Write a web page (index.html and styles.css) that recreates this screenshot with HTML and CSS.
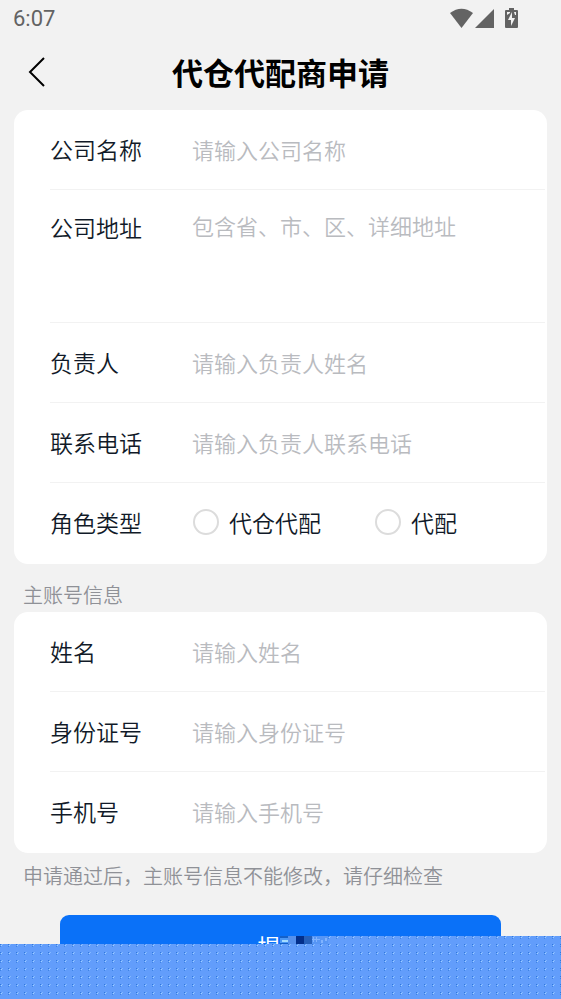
FILE: index.html
```html
<!DOCTYPE html>
<html lang="zh-CN">
<head>
<meta charset="utf-8">
<meta name="viewport" content="width=device-width, initial-scale=1">
<title>代仓代配商申请</title>
<link rel="stylesheet" href="styles.css">
</head>
<body>
<div class="status">
  <span>6:07</span>
  <svg class="status-icons" width="72" height="22" viewBox="0 0 72 22" aria-hidden="true">
    <path d="M0 5Q11.500-3.500 23 5L11.500 20Z"/>
    <path d="M25 20L44 1V20Z"/>
    <path d="M59 0h5v2h3q1 0 1 1v16q0 1-1 1H56q-1 0-1-1V3q0-1 1-1h3Z"/>
    <path class="bolt" d="M62 4L58 12h3v6l4-8h-3ZM57 4h3v1l-3 2ZM64 4h2v3h-1Z"/>
  </svg>
</div>
<header class="nav">
  <button class="back" type="button" aria-label="返回">
    <svg width="18" height="30" viewBox="0 0 18 30"><path d="M16 1L2 15L16 29"/></svg>
  </button>
  <h1>代仓代配商申请</h1>
</header>
<form class="form">
  <section class="card">
    <div class="row"><label for="company">公司名称</label><input id="company" type="text" placeholder="请输入公司名称"></div>
    <div class="row row-tall"><label for="address">公司地址</label><textarea id="address" placeholder="包含省、市、区、详细地址"></textarea></div>
    <div class="row"><label for="leader">负责人</label><input id="leader" type="text" placeholder="请输入负责人姓名"></div>
    <div class="row"><label for="tel">联系电话</label><input id="tel" type="tel" placeholder="请输入负责人联系电话"></div>
    <div class="row" role="radiogroup" aria-labelledby="role-label">
      <span class="caption" id="role-label">角色类型</span>
      <div class="options">
        <label class="option"><input type="radio" name="role">代仓代配</label>
        <label class="option"><input type="radio" name="role">代配</label>
      </div>
    </div>
  </section>
  <h2 class="note note-title">主账号信息</h2>
  <section class="card">
    <div class="row"><label for="name">姓名</label><input id="name" type="text" placeholder="请输入姓名"></div>
    <div class="row"><label for="idno">身份证号</label><input id="idno" type="text" placeholder="请输入身份证号"></div>
    <div class="row"><label for="mobile">手机号</label><input id="mobile" type="tel" placeholder="请输入手机号"></div>
  </section>
  <p class="note">申请通过后，主账号信息不能修改，请仔细检查</p>
  <button class="submit" type="submit">提交</button>
</form>
<div class="veil" aria-hidden="true">
  <div class="veil-step">
    <svg width="48" height="8" viewBox="0 0 48 8">
      <path fill="#1560c8" d="M0 0h8v8H0z"/><path fill="#4a97f5" d="M0 2h8v5H0z"/><path fill="#a5dcff" d="M2 4h6v2H2z"/>
      <path fill="#5590ec" d="M8 0h8v8H8z"/><path fill="#032f8b" d="M16 0h8v8h-8z"/>
      <path fill="#2560bb" d="M24 0h8v8h-8z"/><path fill="#5796f5" d="M32 0h16v8H32z"/>
      <path fill="#80b3ff" d="M33 1h1v5h-1zM36 1h1v5h-1zM32 3h8v1h-8zM41 4h2v3h-2zM45 2h2v3h-2z"/>
    </svg>
  </div>
</div>
</body>
</html>
```
FILE: styles.css
```css
* { box-sizing: border-box; }

body {
  margin: 0;
  min-height: 100vh;
  background: #f2f2f2;
  color: #111a28;
  font-family: "Noto Sans CJK SC", sans-serif;
  font-size: 23px;
  font-weight: 350;
}

.status {
  display: flex;
  justify-content: space-between;
  align-items: center;
  height: 38px;
  padding: 0 39px 0 13px;
  color: #636363;
  font: 400 22px/38px Roboto, sans-serif;
}
.status-icons { fill: #636363; }
.status-icons .bolt { fill: #f2f2f2; }

.nav {
  display: grid;
  grid-template-columns: 48px 1fr 48px;
  align-items: center;
  height: 72px;
  padding: 0 14px 4px;
}
.nav h1 {
  margin: 0;
  color: #000;
  font-size: 31px;
  line-height: 40px;
  font-weight: 700;
  text-align: center;
}
.back {
  display: flex;
  padding: 0 0 0 14px;
  border: 0;
  background: none;
}
.back svg { fill: none; stroke: #000; stroke-width: 2; }

.form { padding: 0 14px; }

.card {
  padding: 0 2px 1px 36px;
  border-radius: 14px;
  background: #fff;
}
.row {
  display: flex;
  align-items: center;
  height: 80px;
  padding-bottom: 2px;
  border-bottom: 1px solid #f2f2f2;
}
.row:last-child { border-bottom: 0; }
.row-tall { align-items: flex-start; height: 133px; padding-top: 19px; }
.row > label, .caption {
  flex: 0 0 142px;
  line-height: 36px;
}
.row > input, textarea {
  flex: 1;
  min-width: 0;
  padding: 0;
  border: 0;
  outline: 0;
  background: none;
  color: inherit;
  font: 350 22px/32px "Noto Sans CJK SC", sans-serif;
}
textarea { height: 96px; resize: none; }
::placeholder { color: #b9bbbf; opacity: 1; }

.options { display: flex; gap: 54px; padding-left: 1px; }
.option { display: flex; align-items: center; gap: 10px; }
.option input {
  appearance: none;
  width: 26px;
  height: 26px;
  margin: 0;
  border: 2px solid #dcdcdc;
  border-radius: 50%;
}

.note {
  margin: 0;
  padding: 0 9px;
  color: #8f9197;
  font-size: 20px;
  line-height: 46px;
  font-weight: 350;
}
.note-title { padding-top: 14px; line-height: 34px; }

.submit {
  display: block;
  width: calc(100% - 92px);
  height: 60px;
  margin: 16px auto 0;
  border: 0;
  border-radius: 9px;
  background: #0a71f8;
  color: #fff;
  font: 400 23px/60px "Noto Sans CJK SC", sans-serif;
}

.veil, .veil-step {
  background-color: #629dfb;
  background-image:
    conic-gradient(from 270deg at 1px 1px, #3279dc 90deg, transparent 0),
    conic-gradient(from 270deg at 1px 1px, #a0cfff 90deg, transparent 0),
    conic-gradient(from 270deg at 1px 1px, #82b8ff 90deg, transparent 0),
    conic-gradient(from 270deg at 1px 1px, #3f84e4 90deg, transparent 0);
  background-position: 0 0, 1px 1px, 2px 0, 0 2px;
  background-size: 8px 8px;
}
.veil {
  position: fixed;
  inset: auto 0 0;
  height: 55px;
}
.veil-step {
  position: absolute;
  right: 0;
  bottom: 100%;
  left: 280px;
  height: 8px;
}
.veil-step svg { display: block; }
```
